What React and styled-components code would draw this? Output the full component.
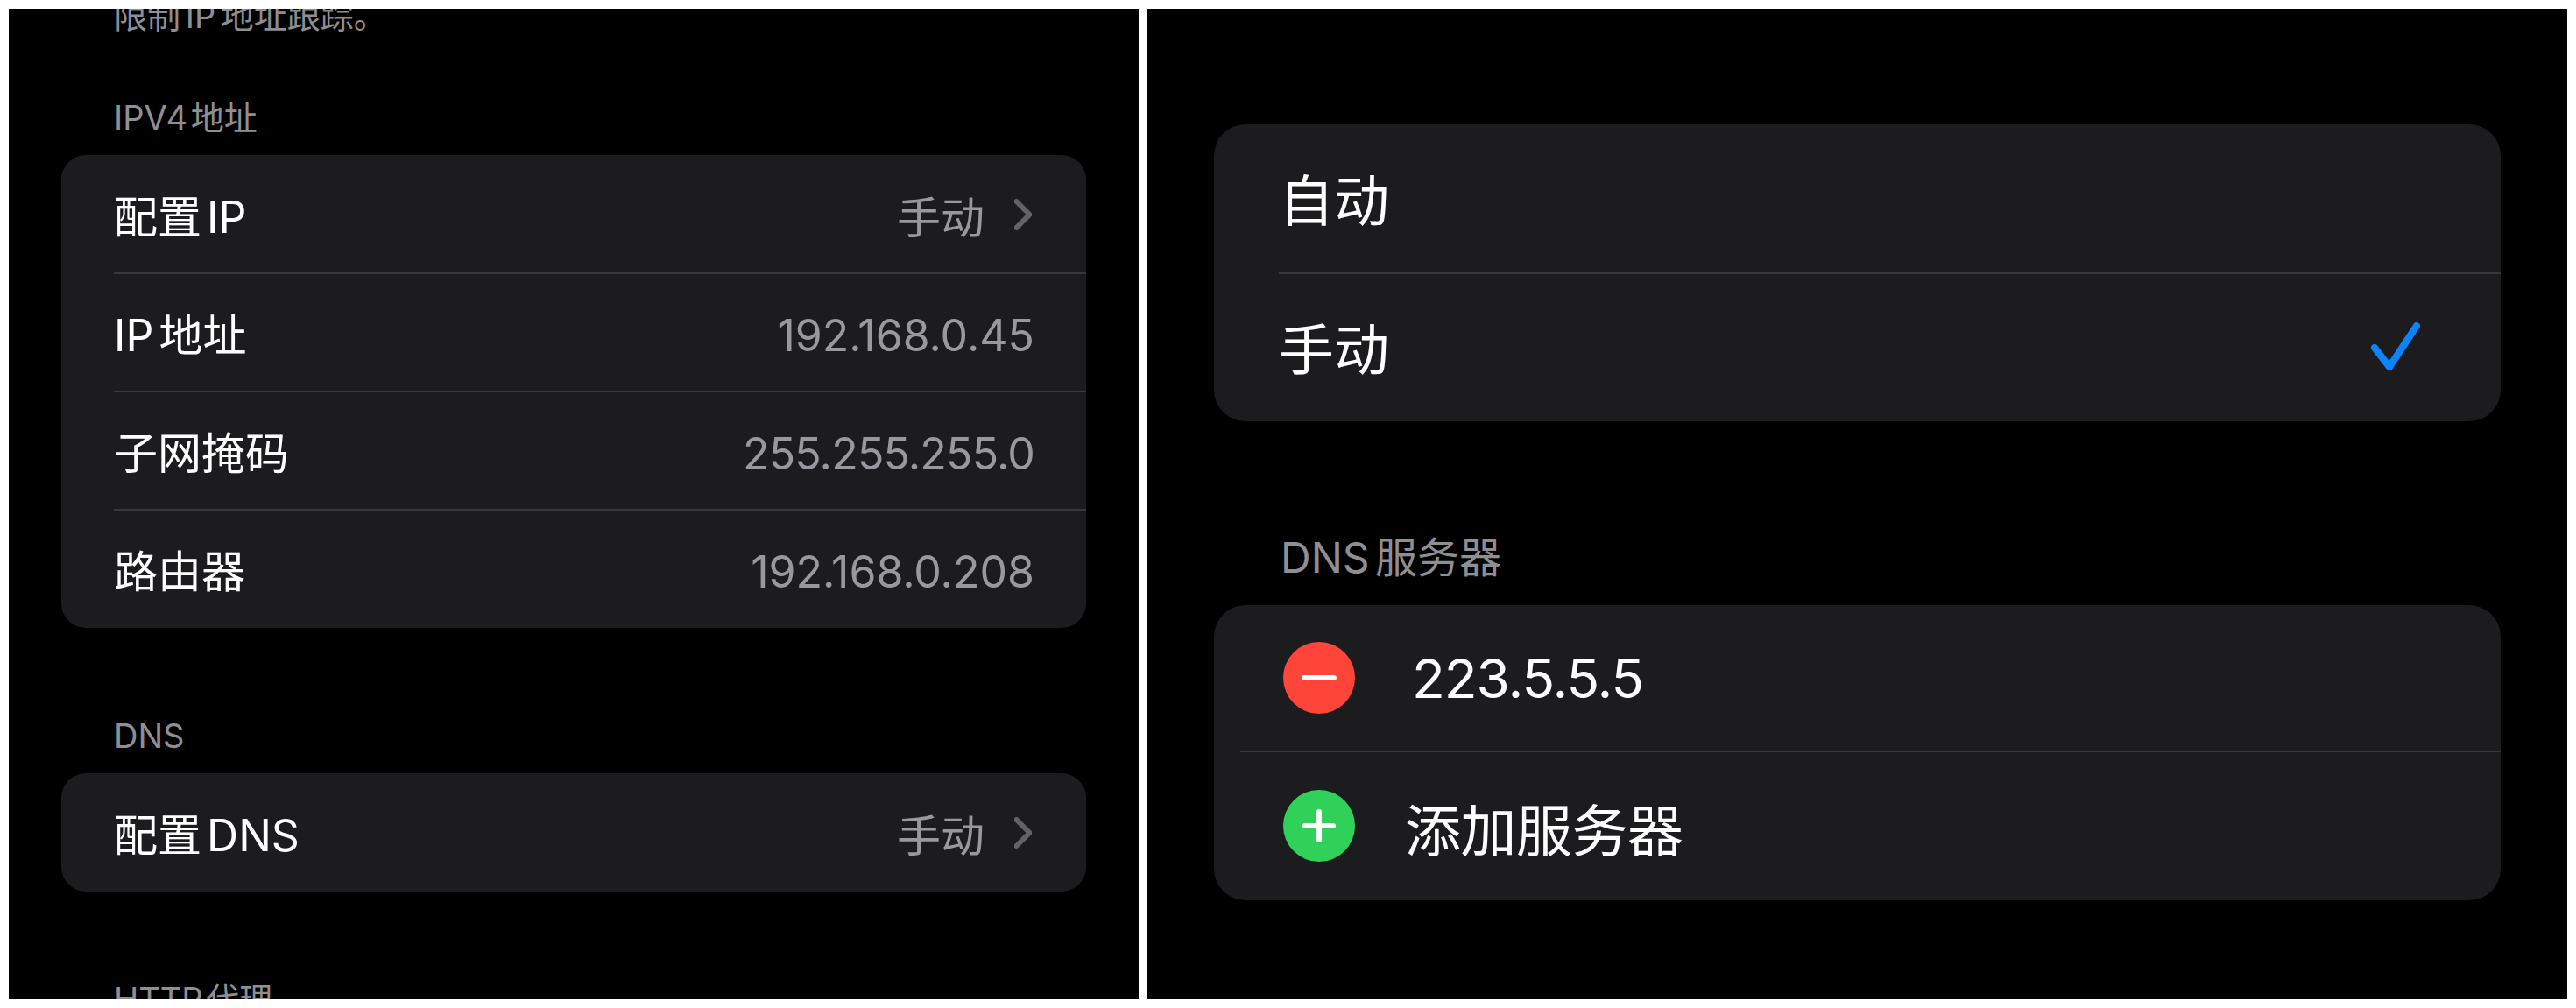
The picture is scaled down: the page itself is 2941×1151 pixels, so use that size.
import React from 'react';
import styled, { createGlobalStyle } from 'styled-components';

const GlobalStyle = createGlobalStyle`
  html, body {
    margin: 0;
    padding: 0;
    background: #fff;
  }
  body {
    font-family: Inter, "Noto Sans CJK SC", sans-serif;
  }
`;

const Page = styled.div`
  display: flex;
  gap: 10px;
  width: 2941px;
  height: 1151px;
  padding: 10px;
  box-sizing: border-box;
`;

const Shot = styled.div`
  width: ${props => props.$width}px;
  height: 1131px;
  flex: none;
  background: #000;
  overflow: hidden;
  box-sizing: border-box;
  padding: ${props => props.$padding};
`;

const Caption = styled.div`
  font-size: ${props => props.$size || 38}px;
  line-height: ${props => props.$line || 46}px;
  word-spacing: ${props => props.$spacing || -7}px;
  color: #8e8e93;
  padding-left: ${props => props.$indent}px;
  margin-top: ${props => props.$top || 0}px;
  margin-bottom: ${props => props.$bottom || 0}px;
  white-space: nowrap;
`;

const Card = styled.div`
  background: #1c1c1e;
  border-radius: ${props => props.$radius}px;
  overflow: hidden;
`;

// 왼쪽 화면 행
const Row = styled.div`
  display: flex;
  align-items: center;
  justify-content: space-between;
  height: 135px;
  padding: 0 59px 2px 60px;
  position: relative;
  font-size: 50px;
  word-spacing: -8px;
  color: #fff;
  white-space: nowrap;
  box-sizing: border-box;

  & + &::before {
    content: '';
    position: absolute;
    top: -1px;
    left: 60px;
    right: 0;
    height: 2px;
    background: #38383a;
  }
`;

const Value = styled.span`
  display: flex;
  align-items: center;
  color: #98989f;
  font-size: 50px;
  padding-top: 8px;
  letter-spacing: ${props => props.$tight || 0}px;
`;

const ChoiceValue = styled.span`
  display: flex;
  align-items: center;
  gap: 34px;
  margin-right: 3px;
  padding-top: 2px;
  color: #98989f;
  font-size: 50px;
`;

// 오른쪽 화면 행
const BigRow = styled.div`
  display: flex;
  align-items: center;
  justify-content: ${props => props.$start ? 'flex-start' : 'space-between'};
  height: ${props => props.$height}px;
  padding: 0 92px 0 ${props => props.$left}px;
  position: relative;
  font-size: 63px;
  color: #fff;
  white-space: nowrap;
  box-sizing: border-box;

  ${props => props.$rule ? `
    &::before {
      content: '';
      position: absolute;
      top: 0;
      left: ${props.$rule}px;
      right: 0;
      height: 2px;
      background: #38383a;
    }
  ` : ''}
`;

const ModeLabel = styled.span`
  margin-bottom: 4px;
`;

const Address = styled.span`
  margin-left: 65px;
  font-size: 62px;
  letter-spacing: -1px;
`;

const AddServer = styled.span`
  margin-left: 57px;
  padding-top: 2px;
  font-size: 64px;
  letter-spacing: -0.5px;
`;

const Chevron = () => (
  <svg width="20" height="36" viewBox="0 0 20 36" fill="none">
    <path d="M2.5 3 L17.5 18 L2.5 33" stroke="#636366" strokeWidth="6" strokeLinecap="round" strokeLinejoin="round" />
  </svg>
);

const Check = () => (
  <svg width="64" height="58" viewBox="0 0 64 58" fill="none">
    <path d="M12 30 L29 52 L60 5" stroke="#0a84ff" strokeWidth="8" strokeLinecap="round" strokeLinejoin="round" />
  </svg>
);

const Badge = ({ color, plus }) => (
  <svg width="82" height="82" viewBox="0 0 82 82" style={{ flex: 'none' }}>
    <circle cx="41" cy="41" r="41" fill={color} />
    <path d={plus ? 'M25 41 H57 M41 25 V57' : 'M24 41 H58'} stroke="#fff" strokeWidth="6" strokeLinecap="round" />
  </svg>
);

export default function App() {
  return (
    <>
      <GlobalStyle />
      <Page>
        <Shot $width={1290} $padding="0 60px">
          <Caption $indent={60} $top={-15} $spacing={-5}>限制 IP 地址跟踪。</Caption>
          <Caption $indent={60} $top={70} $bottom={20}>IPV4 地址</Caption>
          <Card $radius={28}>
            <Row>配置 IP<ChoiceValue>手动<Chevron /></ChoiceValue></Row>
            <Row>IP 地址<Value>192.168.0.45</Value></Row>
            <Row>子网掩码<Value $tight={-0.8}>255.255.255.0</Value></Row>
            <Row>路由器<Value>192.168.0.208</Value></Row>
          </Card>
          <Caption $indent={60} $top={100} $bottom={20}>DNS</Caption>
          <Card $radius={28}>
            <Row>配置 DNS<ChoiceValue>手动<Chevron /></ChoiceValue></Row>
          </Card>
          <Caption $indent={60} $top={100}>HTTP 代理</Caption>
        </Shot>
        <Shot $width={1621} $padding="132px 76px 0">
          <Card $radius={36}>
            <BigRow $height={169} $left={74}><ModeLabel>自动</ModeLabel></BigRow>
            <BigRow $height={170} $left={74} $rule={74}><ModeLabel>手动</ModeLabel><Check /></BigRow>
          </Card>
          <Caption $indent={76} $top={128} $bottom={26} $size={48} $line={56}>DNS 服务器</Caption>
          <Card $radius={36}>
            <BigRow $height={166} $left={79} $start>
              <Badge color="#ff453a" />
              <Address>223.5.5.5</Address>
            </BigRow>
            <BigRow $height={171} $left={79} $rule={30} $start>
              <Badge color="#30d158" plus />
              <AddServer>添加服务器</AddServer>
            </BigRow>
          </Card>
        </Shot>
      </Page>
    </>
  );
}
